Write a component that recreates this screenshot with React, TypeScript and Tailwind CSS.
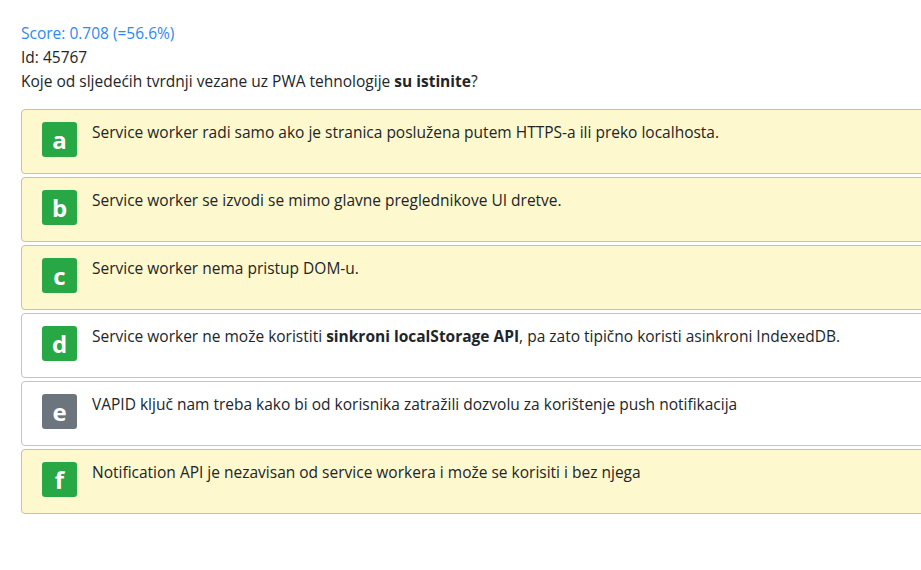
import React from "react";

type Answer = {
  letter: string;
  text: React.ReactNode;
  selected: boolean;
};

const answers: Answer[] = [
  {
    letter: "a",
    text: "Service worker radi samo ako je stranica poslužena putem HTTPS-a ili preko localhosta.",
    selected: true,
  },
  {
    letter: "b",
    text: "Service worker se izvodi se mimo glavne preglednikove UI dretve.",
    selected: true,
  },
  { letter: "c", text: "Service worker nema pristup DOM-u.", selected: true },
  {
    letter: "d",
    text: (
      <>
        Service worker ne može koristiti <b>sinkroni localStorage API</b>, pa zato tipično koristi
        asinkroni IndexedDB.
      </>
    ),
    selected: false,
  },
  {
    letter: "e",
    text: "VAPID ključ nam treba kako bi od korisnika zatražili dozvolu za korištenje push notifikacija",
    selected: false,
  },
  {
    letter: "f",
    text: "Notification API je nezavisan od service workera i može se korisiti i bez njega",
    selected: true,
  },
];

export default function App() {
  return (
    <div
      className="min-h-screen w-full overflow-hidden bg-white pl-[21px] pt-[21px] text-[15.5px] leading-[24px] text-[#212529]"
      style={{ fontFamily: '"Open Sans", "Noto Sans", sans-serif' }}
    >
      {/* Header */}
      <div className="text-[#2b8af7]">Score: 0.708 (=56.6%)</div>
      <div>Id: 45767</div>
      <div>
        Koje od sljedećih tvrdnji vezane uz PWA tehnologije <b>su istinite</b>?
      </div>

      {/* Answers */}
      <div className="mt-[16px] flex w-[960px] flex-col gap-[3px]">
        {answers.map((a) => (
          <div
            key={a.letter}
            className={
              a.selected
                ? "flex h-[65px] items-start gap-[15px] rounded-[4px] border border-[#c9c29f] bg-[#fef8cf] px-[20px] pt-[12px]"
                : "flex h-[65px] items-start gap-[15px] rounded-[4px] border border-[#c4c4c4] bg-white px-[20px] pt-[12px]"
            }
          >
            <div
              className={
                a.letter === "e"
                  ? "flex h-[35px] w-[35px] shrink-0 items-center justify-center rounded-[3px] bg-[#6c757d] text-[24px] font-bold text-white"
                  : "flex h-[35px] w-[35px] shrink-0 items-center justify-center rounded-[3px] bg-[#28a745] text-[24px] font-bold text-white"
              }
            >
              {a.letter}
            </div>
            <div className="-mt-[2px]">{a.text}</div>
          </div>
        ))}
      </div>
    </div>
  );
}
